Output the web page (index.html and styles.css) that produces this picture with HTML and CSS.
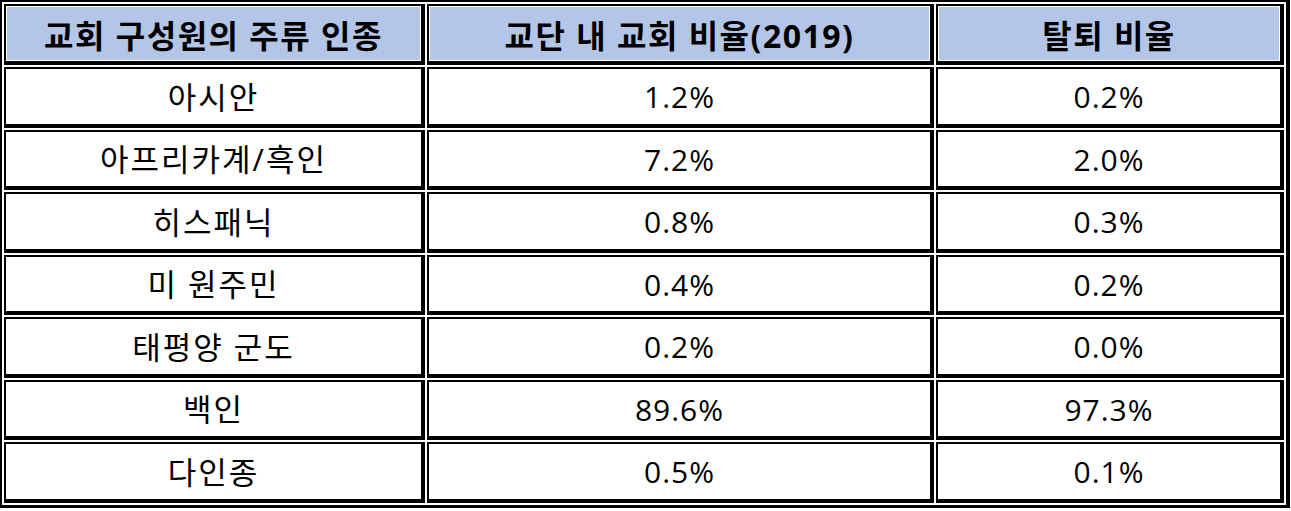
FILE: index.html
```html
<!DOCTYPE html>
<html lang="ko">
<head>
<meta charset="utf-8">
<link rel="stylesheet" href="styles.css">
</head>
<body>
<table class="grid">
  <colgroup>
    <col class="c1">
    <col class="c2">
    <col class="c3">
  </colgroup>
  <thead>
    <tr class="head">
      <th>교회 구성원의 주류 인종</th>
      <th>교단 내 교회 비율(2019)</th>
      <th>탈퇴 비율</th>
    </tr>
  </thead>
  <tbody>
    <tr><td class="name">아시안</td><td>1.2%</td><td>0.2%</td></tr>
    <tr><td class="name">아프리카계/흑인</td><td>7.2%</td><td>2.0%</td></tr>
    <tr><td class="name">히스패닉</td><td>0.8%</td><td>0.3%</td></tr>
    <tr><td class="name">미 원주민</td><td>0.4%</td><td>0.2%</td></tr>
    <tr><td class="name">태평양 군도</td><td>0.2%</td><td>0.0%</td></tr>
    <tr><td class="name">백인</td><td>89.6%</td><td>97.3%</td></tr>
    <tr><td class="name">다인종</td><td>0.5%</td><td>0.1%</td></tr>
  </tbody>
</table>
</body>
</html>
```
FILE: styles.css
```css
html, body {
  margin: 0;
  padding: 0;
  background: #ffffff;
}

.grid {
  table-layout: fixed;
  border-collapse: separate;
  border-spacing: 2px;
  border-style: solid;
  border-color: #000;
  border-width: 2px 4px 3px 2px;
  width: 1290px;
  font-family: "Open Sans", "Noto Sans CJK KR", sans-serif;
  color: #000;
}

.c1 { width: 421px; }
.c2 { width: 507px; }
.c3 { width: 348px; }

.grid th,
.grid td {
  box-sizing: border-box;
  border-style: solid;
  border-color: #000;
  border-width: 2px 4px 4px 2px;
  padding: 2px 0 0 0;
  text-align: center;
  vertical-align: middle;
  line-height: 1;
}

.grid th {
  height: 61px;
  background: #b4c6e7;
  box-shadow: inset 0 0 0 1px #fff;
  font-size: 32px;
  font-weight: 700;
  letter-spacing: 1.5px;
  padding-top: 4px;
}

.grid td {
  height: 60.5px;
  font-size: 30px;
  font-weight: 400;
  letter-spacing: 1px;
}

.grid td.name {
  font-size: 31px;
  letter-spacing: 2px;
}
```
